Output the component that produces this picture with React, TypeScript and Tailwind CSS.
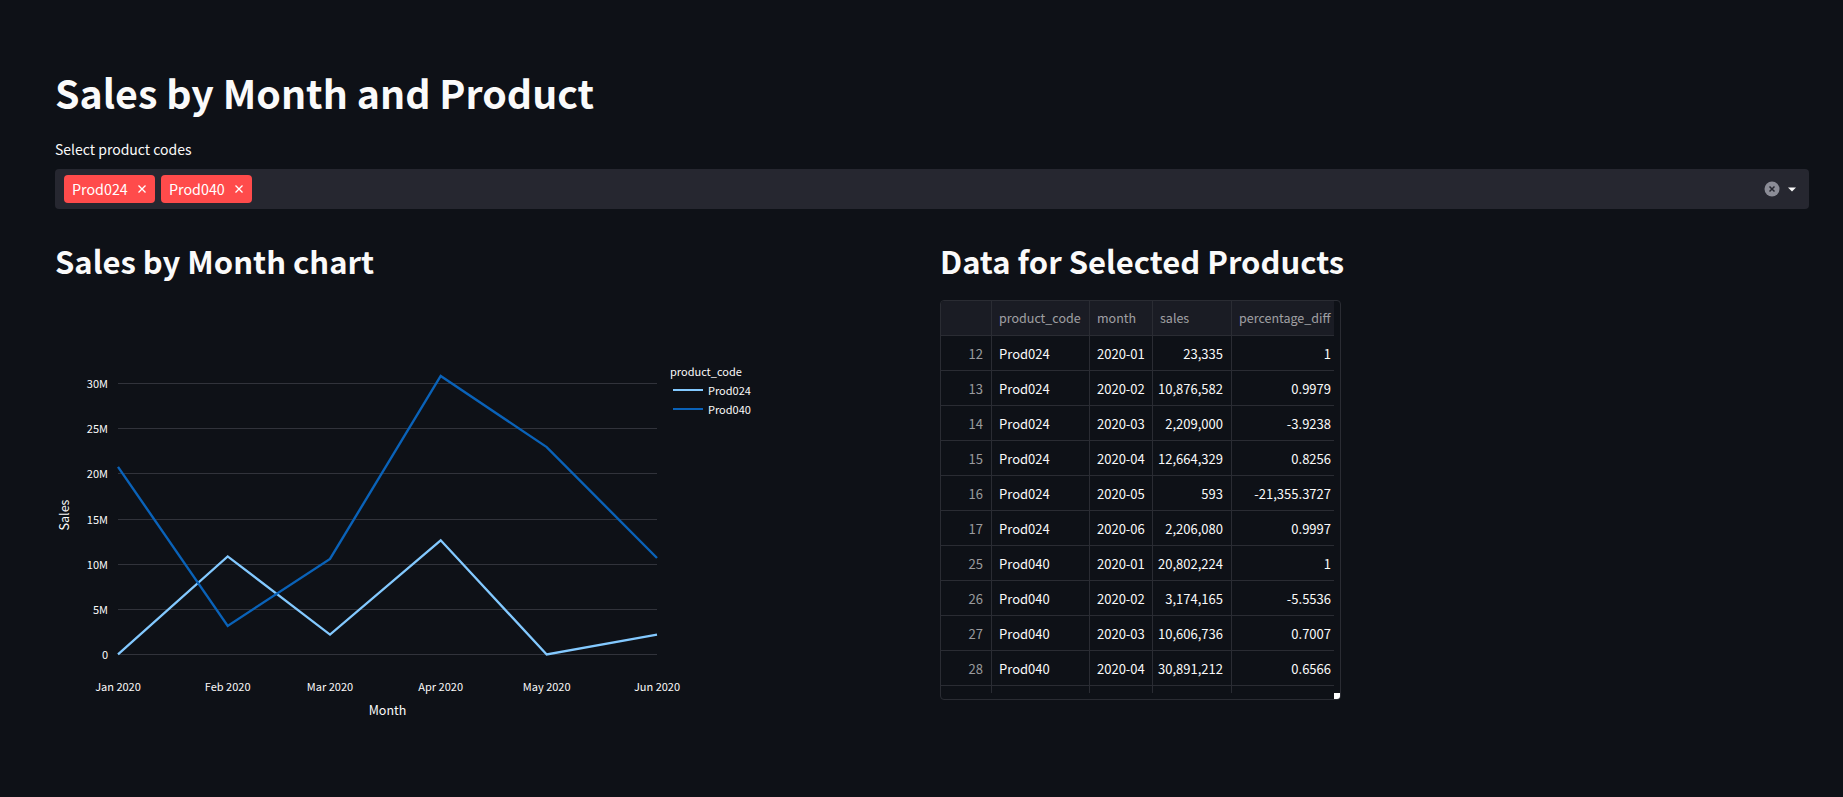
const rows = [
  ["12", "Prod024", "2020-01", "23,335", "1"],
  ["13", "Prod024", "2020-02", "10,876,582", "0.9979"],
  ["14", "Prod024", "2020-03", "2,209,000", "-3.9238"],
  ["15", "Prod024", "2020-04", "12,664,329", "0.8256"],
  ["16", "Prod024", "2020-05", "593", "-21,355.3727"],
  ["17", "Prod024", "2020-06", "2,206,080", "0.9997"],
  ["25", "Prod040", "2020-01", "20,802,224", "1"],
  ["26", "Prod040", "2020-02", "3,174,165", "-5.5536"],
  ["27", "Prod040", "2020-03", "10,606,736", "0.7007"],
  ["28", "Prod040", "2020-04", "30,891,212", "0.6566"],
];

const xs = [118, 227.7, 330, 440.7, 546.7, 657];
const yTicks = [
  ["30M", 383.5],
  ["25M", 428.5],
  ["20M", 473.5],
  ["15M", 519.5],
  ["10M", 564.5],
  ["5M", 609.5],
  ["0", 654.5],
] as const;
const xLabels = ["Jan 2020", "Feb 2020", "Mar 2020", "Apr 2020", "May 2020", "Jun 2020"];

const prod024 = [23335, 10876582, 2209000, 12664329, 593, 2206080];
const prod040 = [20802224, 3174165, 10606736, 30891212, 23000000, 10700000];

function toPoints(values: number[]) {
  return values.map((v, i) => `${xs[i]},${(654.5 - v * 9.017e-6).toFixed(1)}`).join(" ");
}

function Tag({ label }: { label: string }) {
  return (
    <div className="flex h-7 w-[91px] items-center rounded bg-[#ff4b4b] pr-2 pl-2 text-[14.3px] text-white">
      <span>{label}</span>
      <svg className="ml-auto" width="10" height="10" viewBox="0 0 10 10">
        <path d="M1.5 1.5 8.5 8.5M8.5 1.5 1.5 8.5" stroke="#fff" strokeWidth="1.3" />
      </svg>
    </div>
  );
}

function SalesChart() {
  return (
    <svg
      className="mt-[6px] block"
      width="700"
      height="450"
      viewBox="55 290 700 450"
      fill="#fafafa"
    >
      {yTicks.map(([label, y]) => (
        <g key={label}>
          <line x1="118" x2="657" y1={y} y2={y} stroke="#31333b" />
          <text x="108" y={y + 4} textAnchor="end" fontSize="11">
            {label}
          </text>
        </g>
      ))}
      {xLabels.map((label, i) => (
        <text key={label} x={xs[i]} y="691" textAnchor="middle" fontSize="11">
          {label}
        </text>
      ))}
      <polyline points={toPoints(prod024)} fill="none" stroke="#83c9ff" strokeWidth="2.3" />
      <polyline points={toPoints(prod040)} fill="none" stroke="#0a62b8" strokeWidth="2.4" />
      <text x="387.5" y="715" textAnchor="middle" fontSize="12.5">
        Month
      </text>
      <text transform="translate(69 515) rotate(-90)" textAnchor="middle" fontSize="12.5">
        Sales
      </text>
      <text x="670" y="376" fontSize="11">
        product_code
      </text>
      <line x1="673" x2="703" y1="390" y2="390" stroke="#83c9ff" strokeWidth="2" />
      <text x="708" y="395" fontSize="11">
        Prod024
      </text>
      <line x1="673" x2="703" y1="409" y2="409" stroke="#0a62b8" strokeWidth="2" />
      <text x="708" y="414" fontSize="11">
        Prod040
      </text>
    </svg>
  );
}

const cellBase = "flex h-[35px] shrink-0 items-center border-r border-b border-[#2a2c33] pr-2 pl-[7px] whitespace-nowrap";

function DataTable() {
  return (
    <div className="relative mt-4 h-[400px] w-[401px] overflow-hidden rounded border border-[#2a2c33]">
      <div className="h-[392px] w-[393px] overflow-hidden">
        <div className="grid w-[410px] grid-cols-[51px_98px_63px_79px_108px]">
          <div className={`${cellBase} bg-[#1a1c24]`} />
          {["product_code", "month", "sales", "percentage_diff"].map((h) => (
            <div key={h} className={`${cellBase} bg-[#1a1c24] text-[12.5px] text-[#fafafa99]`}>
              {h}
            </div>
          ))}
          {rows.map((r) => (
            <div key={r[0]} className="contents">
              <div className={`${cellBase} justify-end pt-px text-[13px] text-[#fafafa99]`}>{r[0]}</div>
              <div className={`${cellBase} pt-px text-[13px]`}>{r[1]}</div>
              <div className={`${cellBase} pt-px text-[13px]`}>{r[2]}</div>
              <div className={`${cellBase} justify-end pt-px text-[13px]`}>{r[3]}</div>
              <div className={`${cellBase} justify-end pt-px text-[13px]`}>{r[4]}</div>
            </div>
          ))}
          <div className="h-2 border-r border-[#2a2c33]" />
          <div className="h-2 border-r border-[#2a2c33]" />
          <div className="h-2 border-r border-[#2a2c33]" />
          <div className="h-2 border-r border-[#2a2c33]" />
        </div>
      </div>
      <div className="absolute right-0 bottom-0 h-[6px] w-[6px] bg-white" />
    </div>
  );
}

export default function App() {
  return (
    <div className="h-[797px] overflow-hidden bg-[#0e1117] pt-[60px] pr-[34px] pl-[55px] font-['Noto_Sans_CJK_SC',sans-serif] text-[#fafafa]">
      <h1 className="text-[39.3px] leading-[64px] font-bold">Sales by Month and Product</h1>

      <label className="mt-[15px] block text-sm leading-[20px]">Select product codes</label>
      <div className="mt-[10px] flex h-10 items-center gap-[6px] rounded bg-[#262730] pr-[12px] pl-[9px]">
        <Tag label="Prod024" />
        <Tag label="Prod040" />
        <svg className="ml-auto" width="16" height="16" viewBox="0 0 16 16">
          <circle cx="8" cy="8" r="7.5" fill="#8b8c96" />
          <path d="M5.5 5.5 10.5 10.5M10.5 5.5 5.5 10.5" stroke="#262730" strokeWidth="1.5" />
        </svg>
        <svg className="ml-px" width="10" height="6" viewBox="0 0 10 6">
          <path d="M1 1.5H9L5 5.5Z" fill="#fafafa" />
        </svg>
      </div>

      <div className="mt-[29px] flex gap-4">
        <div className="w-[869px]">
          <h2 className="text-[31px] leading-[46px] font-semibold">Sales by Month chart</h2>
          <SalesChart />
        </div>
        <div className="w-[869px]">
          <h2 className="text-[31px] leading-[46px] font-semibold">Data for Selected Products</h2>
          <DataTable />
        </div>
      </div>
    </div>
  );
}
